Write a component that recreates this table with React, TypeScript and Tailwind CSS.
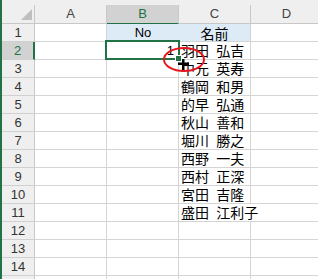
import React from "react";

const GREEN = "#217346";

const names = [
  "羽田 弘吉",
  "中元 英寿",
  "鶴岡 和男",
  "的早 弘通",
  "秋山 善和",
  "堀川 勝之",
  "西野 一夫",
  "西村 正深",
  "宮田 吉隆",
  "盛田 江利子",
];

const cols = ["A", "B", "C", "D"];
const rowCount = 15;

function ColHeader({ label, active }: { label: string; active?: boolean }) {
  return (
    <div className={`h-[24px] flex flex-col ${active ? "" : "border-b border-[#c8c8c8]"}`}>
      <div
        className={
          active
            ? "mt-[5px] flex-1 flex items-center justify-center border-r border-[#c8c8c8] bg-[#d2d2d2] border-b-2 border-b-[#217346] text-[#217346]"
            : "mt-[5px] flex-1 flex items-center justify-center border-r border-[#c8c8c8] text-[#444]"
        }
      >
        {label}
      </div>
    </div>
  );
}

function RowHeader({ n }: { n: number }) {
  const active = n === 2;
  return (
    <div
      className={
        active
          ? "h-[18px] flex items-center justify-center bg-[#d2d2d2] border-b border-[#d0d0d0] border-r-2 border-r-[#217346] text-[#217346]"
          : "h-[18px] flex items-center justify-center bg-[#efefef] border-b border-[#d0d0d0] border-r border-r-[#c8c8c8] text-[#333]"
      }
    >
      {n}
    </div>
  );
}

export default function App() {
  return (
    <div className="w-[318px] h-[279px] overflow-hidden bg-white flex font-['Liberation_Sans',sans-serif] text-[13px] leading-[18px] text-black">
      <div className="w-[2px] shrink-0 bg-[#217346]" />
      <div className="relative flex-1">
        <div className="grid grid-cols-[33px_72px_72px_72px_72px] bg-white">
          {/* corner + column letters */}
          <div className="h-[24px] bg-[#efefef] border-b border-[#c8c8c8] flex flex-col">
            <div className="mt-[5px] flex-1 border-r border-[#c8c8c8] relative">
              <svg className="absolute right-[2px] bottom-[3px]" width="11" height="11" viewBox="0 0 11 11">
                <polygon points="11,0 11,11 0,11" fill="#bfbfbf" />
              </svg>
            </div>
          </div>
          {cols.map((c) => (
            <div key={c} className="bg-[#efefef]">
              <ColHeader label={c} active={c === "B"} />
            </div>
          ))}

          {Array.from({ length: rowCount }, (_, i) => {
            const n = i + 1;
            const name = n === 1 ? "名前" : names[n - 2];
            const header = n === 1;
            const overflow = n === 11;
            return (
              <React.Fragment key={n}>
                <RowHeader n={n} />
                <div className="h-[18px] border-r border-b border-[#d4d4d4]" />
                {header ? (
                  <div className="h-[18px] bg-[#ddebf7] border-b border-[#d4d4d4] flex items-center justify-center">
                    No
                  </div>
                ) : (
                  <div className="h-[18px] border-r border-b border-[#d4d4d4] flex items-center justify-end pr-[4px]">
                    {n === 2 ? "1" : ""}
                  </div>
                )}
                {header ? (
                  <div className="h-[18px] bg-[#ddebf7] border-r border-b border-[#d4d4d4] flex items-center justify-center font-['Noto_Sans_CJK_JP',sans-serif] text-[14px]">
                    {name}
                  </div>
                ) : (
                  <div
                    className={`h-[18px] border-b border-[#d4d4d4] pl-[2px] whitespace-nowrap font-['Noto_Sans_CJK_JP',sans-serif] text-[14px] leading-[17px] [word-spacing:4px] ${
                      overflow ? "" : "border-r"
                    }`}
                  >
                    {name ?? ""}
                  </div>
                )}
                <div className="h-[18px] border-r border-b border-[#d4d4d4]" />
              </React.Fragment>
            );
          })}
        </div>

        {/* active cell B2 */}
        <div className="absolute left-[103px] top-[40px] w-[75px] h-[20px] border-2 border-[#217346]" />
        <div className="absolute left-[173px] top-[55px] w-[7px] h-[7px] bg-[#217346] border border-white" />

        {/* fill cursor and red mark */}
        <svg className="absolute left-[159px] top-[46px]" width="46" height="28" viewBox="0 0 46 28">
          <ellipse cx="23" cy="13.5" rx="20" ry="11.5" fill="none" stroke="#e5161d" strokeWidth="2" />
          <rect x="21" y="13" width="2.5" height="11" fill="#000" />
          <rect x="17" y="16.5" width="11" height="2.5" fill="#000" />
        </svg>
      </div>
    </div>
  );
}
